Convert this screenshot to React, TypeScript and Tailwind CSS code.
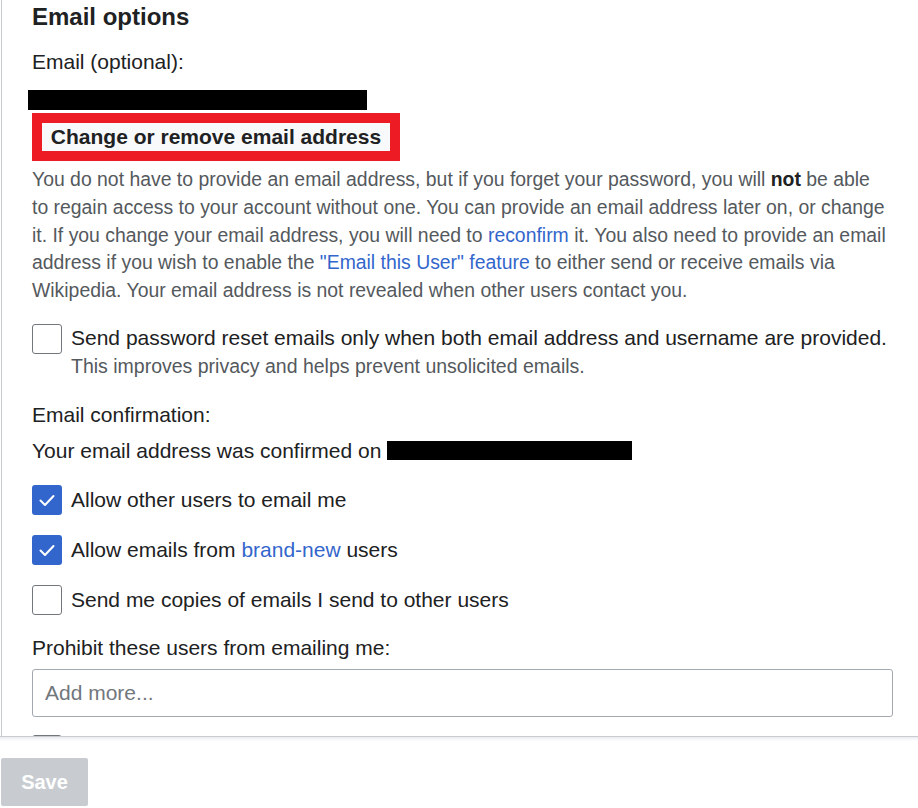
import React from "react";

function Box({ checked = false }: { checked?: boolean }) {
  if (checked) {
    return (
      <span className="flex h-[30px] w-[30px] shrink-0 items-center justify-center rounded-[3px] bg-[#3366cc]">
        <svg width="20" height="20" viewBox="0 0 20 20" fill="none">
          <path d="M3.5 10.5l4.5 4.5 8.5-9" stroke="#fff" strokeWidth="2" strokeLinecap="round" strokeLinejoin="round" />
        </svg>
      </span>
    );
  }
  return <span className="block h-[30px] w-[30px] shrink-0 rounded-[3px] border border-[#72777d] bg-white" />;
}

function Check({ checked, children }: { checked?: boolean; children: React.ReactNode }) {
  return (
    <div className="mt-[20px] flex h-[30px] items-center gap-[9px]">
      <Box checked={checked} />
      <span className="leading-[28px]">{children}</span>
    </div>
  );
}

export default function App() {
  return (
    <div
      className="relative h-[808px] w-[918px] overflow-hidden bg-white text-[21px] text-[#202122]"
      style={{ fontFamily: '"Liberation Sans", Arial, sans-serif' }}
    >
      <div className="ml-[1px] h-[736px] overflow-hidden border-l border-[#c8ccd1] pl-[30px] pr-[25px]">
        <h2 className="h-[34px] text-[24px] font-bold leading-[34px]">Email options</h2>
        <div className="mt-[14px] leading-[28px]">Email (optional):</div>
        <div className="ml-[-4px] mt-[14px] h-[20px] w-[339px] bg-black" />
        <div className="mt-[3px] w-[368px] border-[10px] border-[#ed1c24]">
          <button className="block h-[28px] w-full bg-[#f8f9fa] text-center text-[21px] font-bold leading-[28px] text-[#202122]">
            Change or remove email address
          </button>
        </div>
        <p className="mt-[5px] whitespace-nowrap text-[19.4px] leading-[27.8px] text-[#54595d]">
          You do not have to provide an email address, but if you forget your password, you will{" "}
          <b className="text-[#202122]">not</b> be able
          <br />
          to regain access to your account without one. You can provide an email address later on, or change
          <br />
          it. If you change your email address, you will need to <span className="text-[#3366cc]">reconfirm</span> it.
          You also need to provide an email
          <br />
          address if you wish to enable the <span className="text-[#3366cc]">"Email this User" feature</span> to
          either send or receive emails via
          <br />
          Wikipedia. Your email address is not revealed when other users contact you.
        </p>
        <div className="mt-[19px] flex items-start gap-[9px]">
          <Box />
          <div className="leading-[28px]">
            <div>Send password reset emails only when both email address and username are provided.</div>
            <div className="text-[19.5px] text-[#54595d]">This improves privacy and helps prevent unsolicited emails.</div>
          </div>
        </div>
        <div className="mt-[21px] leading-[28px]">Email confirmation:</div>
        <div className="mt-[8px] flex items-center leading-[28px]">
          <span>Your email address was confirmed on</span>
          <span className="ml-[6px] inline-block h-[19px] w-[245px] bg-black" />
        </div>
        <Check checked>Allow other users to email me</Check>
        <Check checked>
          Allow emails from <span className="text-[#3366cc]">brand-new</span> users
        </Check>
        <Check>Send me copies of emails I send to other users</Check>
        <div className="mt-[19px] leading-[28px]">Prohibit these users from emailing me:</div>
        <input
          className="mt-[7px] block h-[48px] w-[861px] rounded-[3px] border border-[#a2a9b1] px-[12px] text-[21px] text-[#202122] outline-none placeholder:text-[#72777d]"
          placeholder="Add more..."
          style={{ fontFamily: '"Liberation Sans", Arial, sans-serif' }}
        />
        <div className="mt-[18px]">
          <Box />
        </div>
      </div>
      <div className="relative border-t border-[#c8ccd1] bg-white pt-[21px]">
        <div className="absolute inset-x-0 top-0 h-[4px] bg-gradient-to-b from-[#eaecf0] to-white" />
        <button className="relative ml-[1px] h-[48px] w-[87px] rounded-[2px] bg-[#c8ccd1] text-[20px] font-bold text-white">
          Save
        </button>
      </div>
    </div>
  );
}
